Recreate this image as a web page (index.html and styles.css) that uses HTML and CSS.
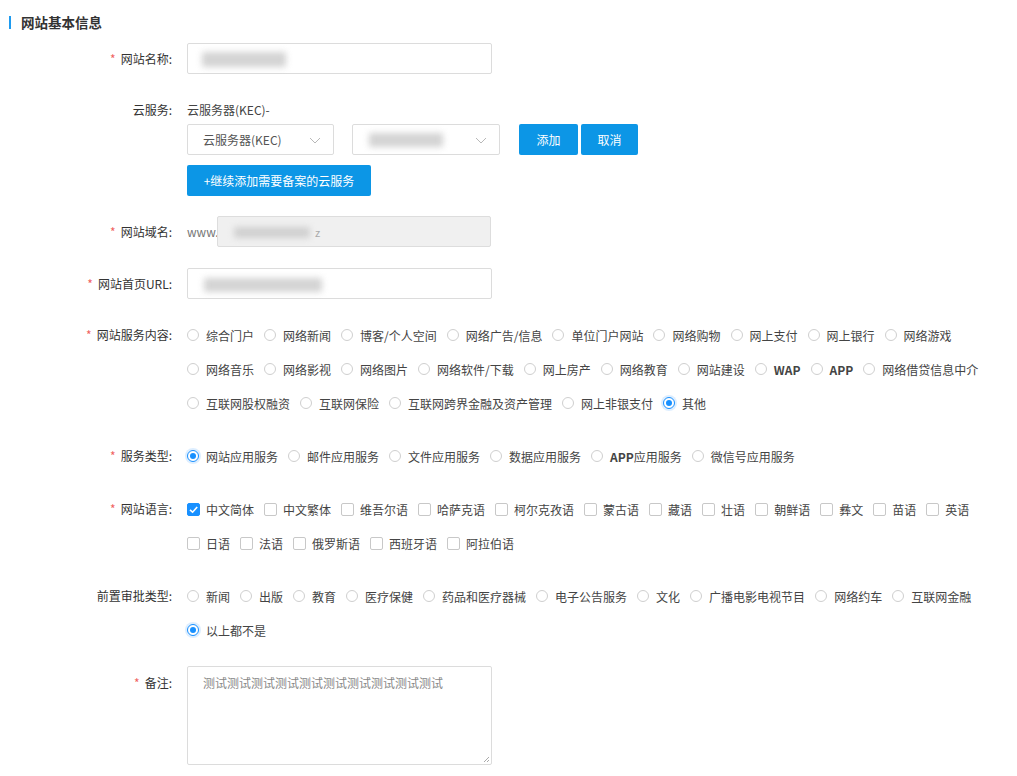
FILE: index.html
```html
<!DOCTYPE html>
<html lang="zh-CN">
<head>
<meta charset="utf-8">
<title>网站基本信息</title>
<link rel="stylesheet" href="styles.css">
</head>
<body>
<div class="page">
  <h2 class="section-title"><span class="bar"></span>网站基本信息</h2>

  <div class="row row-name">
    <div class="label"><span class="req">*</span>网站名称:</div>
    <div class="field">
      <div class="input"><span class="blur b1"></span></div>
    </div>
  </div>

  <div class="row row-cloud">
    <div class="label label-line">云服务:</div>
    <div class="field">
      <div class="cloud-text">云服务器(KEC)-</div>
      <div class="cloud-selects">
        <div class="select s1"><span class="sel-text">云服务器(KEC)</span><svg class="chev" viewBox="0 0 12 7" width="12" height="7"><path d="M1 1 L6 6 L11 1" fill="none" stroke="#b8b8b8" stroke-width="1"/></svg></div>
        <div class="select s2"><span class="blur b2"></span><svg class="chev" viewBox="0 0 12 7" width="12" height="7"><path d="M1 1 L6 6 L11 1" fill="none" stroke="#b8b8b8" stroke-width="1"/></svg></div>
        <button class="btn btn-add">添加</button>
        <button class="btn btn-cancel">取消</button>
      </div>
      <button class="btn btn-more">+继续添加需要备案的云服务</button>
    </div>
  </div>

  <div class="row row-domain">
    <div class="label"><span class="req">*</span>网站域名:</div>
    <div class="field domain">
      <span class="www">www.</span>
      <div class="input disabled"><span class="blur b3"></span><span class="tail">z</span></div>
    </div>
  </div>

  <div class="row row-url">
    <div class="label"><span class="req">*</span>网站首页URL:</div>
    <div class="field">
      <div class="input"><span class="blur b4"></span></div>
    </div>
  </div>

  <div class="row row-opts">
    <div class="label label-opt"><span class="req">*</span>网站服务内容:</div>
    <div class="field">
      <div class="opt-line">
        <label class="opt"><span class="radio"></span>综合门户</label>
        <label class="opt"><span class="radio"></span>网络新闻</label>
        <label class="opt"><span class="radio"></span>博客/个人空间</label>
        <label class="opt"><span class="radio"></span>网络广告/信息</label>
        <label class="opt"><span class="radio"></span>单位门户网站</label>
        <label class="opt"><span class="radio"></span>网络购物</label>
        <label class="opt"><span class="radio"></span>网上支付</label>
        <label class="opt"><span class="radio"></span>网上银行</label>
        <label class="opt"><span class="radio"></span>网络游戏</label>
      </div>
      <div class="opt-line">
        <label class="opt"><span class="radio"></span>网络音乐</label>
        <label class="opt"><span class="radio"></span>网络影视</label>
        <label class="opt"><span class="radio"></span>网络图片</label>
        <label class="opt"><span class="radio"></span>网络软件/下载</label>
        <label class="opt"><span class="radio"></span>网上房产</label>
        <label class="opt"><span class="radio"></span>网络教育</label>
        <label class="opt"><span class="radio"></span>网站建设</label>
        <label class="opt"><span class="radio"></span><b class="lat">WAP</b></label>
        <label class="opt"><span class="radio"></span><b class="lat">APP</b></label>
        <label class="opt"><span class="radio"></span>网络借贷信息中介</label>
      </div>
      <div class="opt-line">
        <label class="opt"><span class="radio"></span>互联网股权融资</label>
        <label class="opt"><span class="radio"></span>互联网保险</label>
        <label class="opt"><span class="radio"></span>互联网跨界金融及资产管理</label>
        <label class="opt"><span class="radio"></span>网上非银支付</label>
        <label class="opt"><span class="radio on"></span>其他</label>
      </div>
    </div>
  </div>

  <div class="row row-opts">
    <div class="label label-opt"><span class="req">*</span>服务类型:</div>
    <div class="field">
      <div class="opt-line">
        <label class="opt"><span class="radio on"></span>网站应用服务</label>
        <label class="opt"><span class="radio"></span>邮件应用服务</label>
        <label class="opt"><span class="radio"></span>文件应用服务</label>
        <label class="opt"><span class="radio"></span>数据应用服务</label>
        <label class="opt"><span class="radio"></span><b class="lat">APP</b>应用服务</label>
        <label class="opt"><span class="radio"></span>微信号应用服务</label>
      </div>
    </div>
  </div>

  <div class="row row-opts">
    <div class="label label-opt"><span class="req">*</span>网站语言:</div>
    <div class="field">
      <div class="opt-line">
        <label class="opt"><span class="check on"><svg viewBox="0 0 13 13" width="13" height="13"><path d="M3 6.8 L5.6 9.2 L10.2 4" fill="none" stroke="#fff" stroke-width="1.6"/></svg></span>中文简体</label>
        <label class="opt"><span class="check"></span>中文繁体</label>
        <label class="opt"><span class="check"></span>维吾尔语</label>
        <label class="opt"><span class="check"></span>哈萨克语</label>
        <label class="opt"><span class="check"></span>柯尔克孜语</label>
        <label class="opt"><span class="check"></span>蒙古语</label>
        <label class="opt"><span class="check"></span>藏语</label>
        <label class="opt"><span class="check"></span>壮语</label>
        <label class="opt"><span class="check"></span>朝鲜语</label>
        <label class="opt"><span class="check"></span>彝文</label>
        <label class="opt"><span class="check"></span>苗语</label>
        <label class="opt"><span class="check"></span>英语</label>
      </div>
      <div class="opt-line">
        <label class="opt"><span class="check"></span>日语</label>
        <label class="opt"><span class="check"></span>法语</label>
        <label class="opt"><span class="check"></span>俄罗斯语</label>
        <label class="opt"><span class="check"></span>西班牙语</label>
        <label class="opt"><span class="check"></span>阿拉伯语</label>
      </div>
    </div>
  </div>

  <div class="row row-opts">
    <div class="label label-opt">前置审批类型:</div>
    <div class="field">
      <div class="opt-line">
        <label class="opt"><span class="radio"></span>新闻</label>
        <label class="opt"><span class="radio"></span>出版</label>
        <label class="opt"><span class="radio"></span>教育</label>
        <label class="opt"><span class="radio"></span>医疗保健</label>
        <label class="opt"><span class="radio"></span>药品和医疗器械</label>
        <label class="opt"><span class="radio"></span>电子公告服务</label>
        <label class="opt"><span class="radio"></span>文化</label>
        <label class="opt"><span class="radio"></span>广播电影电视节目</label>
        <label class="opt"><span class="radio"></span>网络约车</label>
        <label class="opt"><span class="radio"></span>互联网金融</label>
      </div>
      <div class="opt-line">
        <label class="opt"><span class="radio on"></span>以上都不是</label>
      </div>
    </div>
  </div>

  <div class="row row-note">
    <div class="label label-note"><span class="req">*</span>备注:</div>
    <div class="field">
      <div class="textarea">测试测试测试测试测试测试测试测试测试测试<svg class="grip" viewBox="0 0 8 8" width="8" height="8"><path d="M7 2 L2 7 M7 5 L5 7" stroke="#aaa" stroke-width="1"/></svg></div>
    </div>
  </div>
</div>
</body>
</html>
```

FILE: styles.css
```css
* { box-sizing: border-box; }
html, body { margin: 0; padding: 0; background: #fff; }
body {
  font-family: "Noto Sans CJK SC", "Noto Sans", "Liberation Sans", sans-serif;
  font-size: 12px;
  color: #444;
}
.page { width: 1017px; min-height: 776px; padding-top: 12px; }

.section-title {
  margin: 0;
  height: 20px;
  line-height: 20px;
  font-size: 13.5px;
  font-weight: 600;
  color: #333;
  display: flex;
  align-items: center;
  padding-left: 9px;
}
.section-title .bar {
  display: inline-block;
  width: 2px;
  height: 13px;
  background: #1e9bf0;
  margin-right: 10px;
}

.row { display: flex; align-items: flex-start; }
.label {
  width: 172px;
  flex: none;
  text-align: right;
  color: #333;
  line-height: 31px;
  white-space: nowrap;
}
.label .req { color: #f0625f; margin-right: 5px; font-size: 12px; }
.field { margin-left: 15px; flex: none; }

.input {
  width: 305px;
  height: 31px;
  border: 1px solid #dcdcdc;
  border-radius: 2px;
  background: #fff;
  position: relative;
}
.input.disabled { width: 274px; background: #f0f0f0; border-color: #ddd; }

.blur {
  position: absolute;
  background: #c9c9c9;
  filter: blur(3px);
  opacity: 0.8;
}
.b1 { left: 14px; top: 8px; width: 84px; height: 15px; }
.b2 { left: 16px; top: 8px; width: 74px; height: 14px; }
.b3 { left: 16px; top: 10px; width: 76px; height: 11px; }
.b4 { left: 16px; top: 9px; width: 118px; height: 14px; }
.tail { position: absolute; left: 97px; top: 7px; color: #aaa; font-size: 11px; line-height: 16px; }

.row-name { margin-top: 11px; }
.row-name .label { line-height: 31px; }

.row-cloud { margin-top: 26px; }
.label-line { line-height: 20px; }
.cloud-text { line-height: 20px; color: #444; }
.cloud-selects { display: flex; align-items: center; margin-top: 4px; }
.select {
  height: 31px;
  border: 1px solid #dcdcdc;
  border-radius: 2px;
  position: relative;
  display: flex;
  align-items: center;
  padding-left: 15px;
  color: #555;
}
.select.s1 { width: 147px; }
.select.s2 { width: 148px; margin-left: 18px; }
.chev { position: absolute; right: 12px; top: 12px; }
.btn {
  border: none;
  border-radius: 2px;
  background: #0c96e6;
  color: #fff;
  font-family: inherit;
  font-size: 12px;
  height: 31px;
  padding: 0;
  cursor: pointer;
}
.btn-add { width: 59px; margin-left: 19px; }
.btn-cancel { width: 57px; margin-left: 3px; }
.btn-more { display: block; width: 184px; margin-top: 10px; }

.row-domain { margin-top: 20px; }
.domain { display: flex; align-items: center; }
.www { width: 30px; color: #777; }

.row-url { margin-top: 21px; }

.row-opts { margin-top: 19px; }
.row-opts:first-of-type { margin-top: 20px; }
.label-opt { line-height: 34px; }
.opt-line { display: flex; align-items: center; height: 34px; white-space: nowrap; }
.opt { display: flex; align-items: center; margin-right: 10px; color: #444; }
.lat { font-weight: 600; color: #444; }
.radio {
  width: 12px; height: 12px;
  border: 1px solid #cfcfcf;
  border-radius: 50%;
  margin-right: 7px;
  flex: none;
  position: relative;
  background: #fff;
}
.radio.on { border-color: #1890ff; box-shadow: 0 0 0 2px rgba(24,144,255,0.15); }
.radio.on::after {
  content: "";
  position: absolute;
  left: 2px; top: 2px;
  width: 6px; height: 6px;
  border-radius: 50%;
  background: #1890ff;
}
.check {
  width: 13px; height: 13px;
  border: 1px solid #c8c8c8;
  border-radius: 2px;
  margin-right: 6px;
  flex: none;
  background: #fff;
  position: relative;
}
.check.on { background: #1890ff; border-color: #1890ff; }
.check svg { position: absolute; left: -1px; top: -1px; }

.row-note { margin-top: 19px; }
.label-note { line-height: 20px; padding-top: 7px; }
.textarea {
  width: 305px;
  height: 99px;
  border: 1px solid #dcdcdc;
  border-radius: 2px;
  padding: 7px 15px;
  color: #888;
  line-height: 18px;
  position: relative;
}
.grip { position: absolute; right: 1px; bottom: 1px; }
```
